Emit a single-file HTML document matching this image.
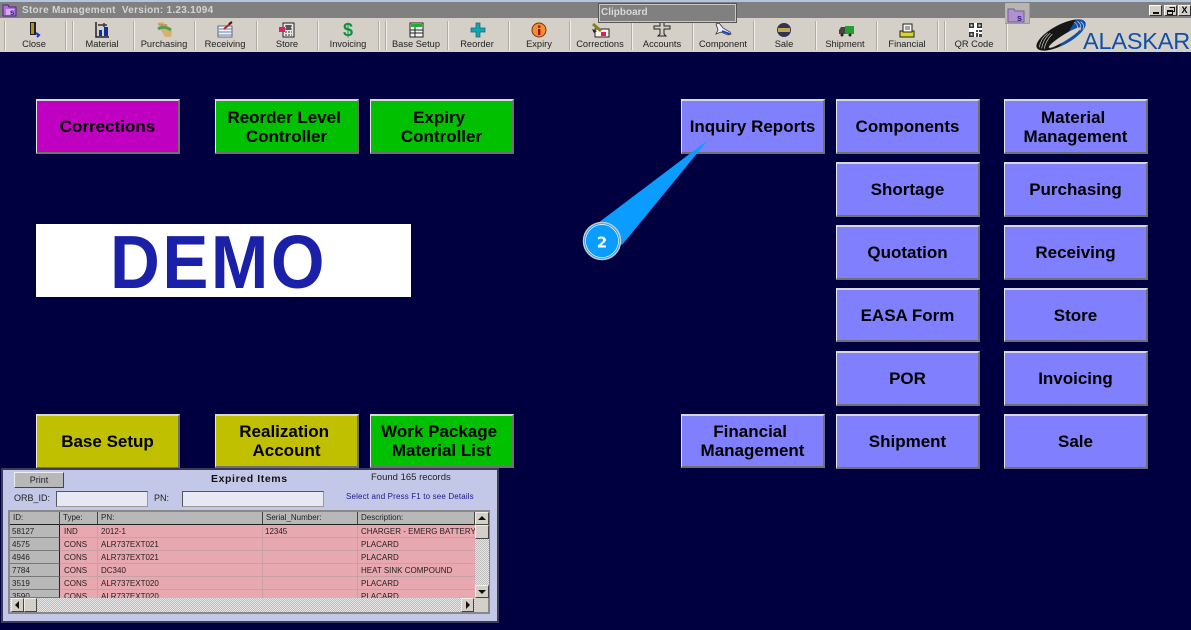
<!DOCTYPE html>
<html><head><meta charset="utf-8"><title>Store Management</title>
<style>
html,body{margin:0;padding:0}
body{width:1191px;height:630px;overflow:hidden;background:#000040;position:relative;font-family:"Liberation Sans",sans-serif}
div,svg,span{position:absolute;box-sizing:border-box}
.tbar{left:0;top:18px;width:1191px;height:34px;background:#d4d0c8}
.sep{top:21px;width:2px;height:29px;border-left:1px solid #aeaba5;border-right:1px solid #f0efec}
.l{top:38px;width:80px;text-align:center;font-size:9.3px;line-height:12px;color:#222;white-space:nowrap}
.b{width:144px;height:55px;border-style:solid;border-width:2px 2px 2px 1px;border-color:#d8d8d8 #707070 #707070 #e8e8e8;display:flex;align-items:center;justify-content:center;text-align:center;font-weight:bold;font-size:17px;line-height:19px;color:#000;white-space:nowrap}
.p{background:#8080ff}.g{background:#00c000}.y{background:#c0c000}.m{background:#c000c0}
.ic{top:21px;width:20px;height:17px}
.cap{font-size:9px;line-height:12px;color:#222;white-space:nowrap}
.inp{height:16px;background:#e8e8f4;border:1px solid;border-color:#555 #999 #999 #555}
.hd{top:512px;height:13px;background:#b8b8b8;border-bottom:1px solid #222;border-right:1px solid #444;font-size:8px;line-height:12px;color:#222;padding-left:3px;white-space:nowrap}
.idc{left:10px;width:50px;height:13px;background:#b8b8b8;border-bottom:1px solid #777;border-right:1px solid #222;font-size:8px;line-height:13px;color:#222;padding-left:2px;overflow:hidden}
.t{font-size:8px;line-height:12px;color:#222;white-space:nowrap}
.sb{background:#d4d0c8;border:1px solid;border-color:#eee #444 #444 #eee}
.chk{background:conic-gradient(#bcbcbc 25%,#e6e6e6 0 50%,#bcbcbc 0 75%,#e6e6e6 0) 0 0/2px 2px}
.w{top:5px;width:13px;height:11px;background:#d4d0c8;border:1px solid;border-color:#fff #333 #333 #fff}
</style></head><body>
<div style="left:0;top:0;width:1191px;height:2px;background:#b4c4dc"></div>
<div style="left:0;top:2px;width:1191px;height:16px;background:#808080"></div>
<svg style="left:2px;top:3px" width="15" height="14" viewBox="0 0 15 14"><path d="M1 2h5l1 2h7v9H1z" fill="#b070d8" stroke="#502080"/><rect x="4" y="6" width="8" height="6" fill="#d8a8f0"/><text x="8" y="12" font-size="8" font-weight="bold" fill="#201080" font-family="Liberation Sans">s</text></svg>
<div style="left:22px;top:5px;font-size:10px;line-height:12px;font-weight:bold;color:#d4d4d4;white-space:nowrap;letter-spacing:.27px">Store Management&nbsp; Version: 1.23.1094</div>

<div class="tbar"></div>
<div class="sep" style="left:4px"></div><div class="sep" style="left:65px"></div><div class="sep" style="left:72px"></div><div class="sep" style="left:133px"></div><div class="sep" style="left:194px"></div><div class="sep" style="left:256px"></div><div class="sep" style="left:317px"></div><div class="sep" style="left:378px"></div><div class="sep" style="left:385px"></div><div class="sep" style="left:447px"></div><div class="sep" style="left:508px"></div><div class="sep" style="left:569px"></div><div class="sep" style="left:631px"></div><div class="sep" style="left:692px"></div><div class="sep" style="left:753px"></div><div class="sep" style="left:815px"></div><div class="sep" style="left:876px"></div><div class="sep" style="left:937px"></div><div class="sep" style="left:944px"></div><div class="sep" style="left:1006px"></div>

<svg class="ic" style="left:24px" viewBox="0 0 20 17"><path d="M6 1h6v13H6z" fill="#222"/><path d="M7 2h3v11H7z" fill="#b09020"/><path d="M12 12l3 2-2 2" fill="none" stroke="#2030c0" stroke-width="2"/></svg>
<svg class="ic" style="left:92px" viewBox="0 0 20 17"><path d="M4 1v15h13" fill="none" stroke="#222" stroke-width="1.500"/><path d="M7 9h3v6H7zM12 6h4v9h-4z" fill="#1030a0"/><path d="M6 4h9M12 2v4" stroke="#333" stroke-width="1.500" fill="none"/></svg>
<svg class="ic" style="left:154px" viewBox="0 0 20 17"><path d="M3 2l6-1 9 9-1 6-6 0z" fill="#d8b070"/><path d="M4 8q6-4 13 1" stroke="#50a050" stroke-width="3" fill="none"/><path d="M5 3q5 2 8 1" stroke="#c09060" stroke-width="2" fill="none"/></svg>
<svg class="ic" style="left:215px" viewBox="0 0 20 17"><rect x="3" y="5" width="14" height="11" fill="#f4f4f4" stroke="#668"/><path d="M3 8h14M3 11h14M3 14h14" stroke="#6080b0"/><path d="M9 8l7-6" stroke="#c02020" stroke-width="2"/><path d="M14 3l3-2" stroke="#222" stroke-width="2"/></svg>
<svg class="ic" style="left:277px" viewBox="0 0 20 17"><rect x="6" y="2" width="11" height="14" fill="#e8e8e8" stroke="#222"/><path d="M8 5h7M8 8h7M8 11h7M8 14h7" stroke="#333" stroke-dasharray="2 1"/><rect x="2" y="6" width="6" height="5" fill="#e02060"/><rect x="9" y="4" width="5" height="5" fill="#555"/></svg>
<svg class="ic" style="left:338px" viewBox="0 0 20 17"><text x="10" y="15" text-anchor="middle" font-size="18" font-weight="bold" fill="#109040" font-family="Liberation Sans">$</text></svg>
<svg class="ic" style="left:407px" viewBox="0 0 20 17"><rect x="3" y="2" width="13" height="14" fill="#f4f4f4" stroke="#222"/><rect x="4" y="3" width="11" height="3" fill="#20b030"/><path d="M3 9h13M3 12h13M8 6v10" stroke="#222"/></svg>
<svg class="ic" style="left:468px" viewBox="0 0 20 17"><path d="M8 2h4v5h5v4h-5v5H8v-5H3V7h5z" fill="#10a8b0" stroke="#206070" stroke-width=".7"/></svg>
<svg class="ic" style="left:529px" viewBox="0 0 20 17"><circle cx="10" cy="9" r="7" fill="#f09030" stroke="#803010"/><rect x="9" y="8" width="2.400" height="6" fill="#a01010"/><rect x="9" y="4.500" width="2.400" height="2.200" fill="#a01010"/></svg>
<svg class="ic" style="left:590px" viewBox="0 0 20 17"><path d="M5 8h14v8H5z" fill="#f4f4f4" stroke="#222"/><path d="M3 3l8 7" stroke="#888020" stroke-width="3"/><path d="M2 8l5 2-3 2z" fill="#222"/><rect x="11" y="11" width="5" height="4" fill="#e02050"/></svg>
<svg class="ic" style="left:652px" viewBox="0 0 20 17"><path d="M8 1h4v4h6v3h-6v5l2 2H6l2-2V8H2V5h6z" fill="#d4d0c8" stroke="#222"/></svg>
<svg class="ic" style="left:713px" viewBox="0 0 20 17"><path d="M3 3l3-1 4 5 7 4 1 2-3 1-7-3-5 2 2-4z" fill="#eef" stroke="#333" stroke-width=".8"/><path d="M9 10l8 3" stroke="#2040d0" stroke-width="2"/></svg>
<svg class="ic" style="left:774px" viewBox="0 0 20 17"><circle cx="10" cy="9" r="7" fill="#333355"/><rect x="4" y="7" width="12" height="4" fill="#c0a850"/></svg>
<svg class="ic" style="left:836px" viewBox="0 0 20 17"><rect x="9" y="5" width="9" height="8" fill="#20a030"/><path d="M3 13V9l2-3h4v7z" fill="#444"/><circle cx="6" cy="14" r="1.500" fill="#222"/><circle cx="14" cy="14" r="1.500" fill="#222"/></svg>
<svg class="ic" style="left:897px" viewBox="0 0 20 17"><rect x="3" y="10" width="14" height="6" fill="#d8d820" stroke="#222"/><rect x="6" y="3" width="9" height="8" fill="#f4f4f4" stroke="#222"/><path d="M8 6h5M8 8h5" stroke="#555"/></svg>
<svg class="ic" style="left:966px" viewBox="0 0 20 17"><rect x="3" y="2" width="13" height="14" fill="#fff"/><path d="M3 2h5v5H3zM11 2h5v5h-5zM3 11h5v5H3z" fill="#333"/><path d="M4.500 3.500h2v2h-2zM12.500 3.500h2v2h-2zM4.500 12.500h2v2h-2z" fill="#ddd"/><path d="M10 9h2v2h-2zM13 9h3v2h-3zM10 12h2v4h-2zM13 13h3v3h-3z" fill="#444"/></svg>

<div class="l" style="left:-6px">Close</div><div class="l" style="left:62px">Material</div><div class="l" style="left:124px">Purchasing</div><div class="l" style="left:185px">Receiving</div><div class="l" style="left:247px">Store</div><div class="l" style="left:308px">Invoicing</div><div class="l" style="left:376px">Base Setup</div><div class="l" style="left:437px">Reorder</div><div class="l" style="left:499px">Expiry</div><div class="l" style="left:560px">Corrections</div><div class="l" style="left:622px">Accounts</div><div class="l" style="left:683px">Component</div><div class="l" style="left:744px">Sale</div><div class="l" style="left:805px">Shipment</div><div class="l" style="left:867px">Financial</div><div class="l" style="left:934px">QR Code</div>

<div style="left:598px;top:3px;width:139px;height:20px;background:#808080;border:1px solid #555;box-shadow:inset 0 0 0 1px #c8c8c8;font-size:10px;line-height:18px;color:#d8d8d8;font-weight:bold;padding-left:2px">Clipboard</div>

<div style="left:1005px;top:3px;width:25px;height:21px;background:#b8b4b0;border-right:1px solid #9a9a9a;border-bottom:1px solid #9a9a9a"></div>
<svg style="left:1007px;top:7px" width="18" height="16" viewBox="0 0 18 16"><path d="M1 2h6l1 2h9v11H1z" fill="#b090d0" stroke="#706090"/><text x="10" y="14" font-size="9" font-weight="bold" fill="#302080" font-family="Liberation Sans">s</text></svg>
<div class="w" style="left:1149px"><svg style="left:3px;top:6px" width="6" height="2"><rect width="6" height="2" fill="#111"/></svg></div>
<div class="w" style="left:1164px"><svg style="left:2px;top:1px" width="8" height="8"><path d="M2.500.5h5v4h-2M.5 3.500h5v4h-5zM.5 4.500h5" fill="none" stroke="#111"/></svg></div>
<div class="w" style="left:1178px;font-size:9px;line-height:9px;text-align:center;font-weight:bold">X</div>

<svg style="left:1034px;top:18px" width="56" height="34" viewBox="102 54 168 102"><defs><clipPath id="bl"><path d="M125 158L270 158 270 62 245 85 165 132z"/></clipPath></defs>
<ellipse cx="183" cy="105" rx="82" ry="30" transform="rotate(-28 183 105)" fill="#161616"/>
<ellipse cx="183" cy="105" rx="82" ry="30" transform="rotate(-28 183 105)" fill="#1050a8" clip-path="url(#bl)"/>
<ellipse cx="194" cy="113" rx="56" ry="9" transform="rotate(-32 194 113)" fill="#d4d0c8"/>
<path d="M118 142q3-25 25-42M125 145q3-25 26-46M133 146q3-22 24-44M222 66q16 8 8 30M232 64q16 10 8 28M242 65q14 10 6 24" stroke="#d4d0c8" stroke-width="2" fill="none"/></svg>
<div style="left:1083px;top:29px;width:108px;height:23px;overflow:hidden;font-size:23.500px;line-height:25px;color:#1050a8;white-space:nowrap;letter-spacing:-.2px">ALASKAR</div>

<div class="b m" style="left:36px;top:99px">Corrections</div>
<div class="b g" style="left:215px;top:99px"><span style="position:static">Reorder Level&nbsp;<br>Controller</span></div>
<div class="b g" style="left:370px;top:99px"><span style="position:static">Expiry&nbsp;<br>Controller</span></div>
<div class="b p" style="left:681px;top:99px">Inquiry Reports</div>
<div class="b p" style="left:836px;top:99px">Components</div>
<div class="b p" style="left:1004px;top:99px"><span style="position:static">Material&nbsp;<br>Management</span></div>
<div class="b p" style="left:836px;top:162px">Shortage</div>
<div class="b p" style="left:1004px;top:162px">Purchasing</div>
<div class="b p" style="left:836px;top:225px">Quotation</div>
<div class="b p" style="left:1004px;top:225px">Receiving</div>
<div class="b p" style="left:836px;top:288px;height:54px">EASA Form</div>
<div class="b p" style="left:1004px;top:288px;height:54px">Store</div>
<div class="b p" style="left:836px;top:351px">POR</div>
<div class="b p" style="left:1004px;top:351px">Invoicing</div>
<div class="b y" style="left:36px;top:414px">Base Setup</div>
<div class="b y" style="left:215px;top:414px;height:54px"><span style="position:static">Realization&nbsp;<br>Account</span></div>
<div class="b g" style="left:370px;top:414px;height:54px"><span style="position:static">Work Package&nbsp;<br>Material List</span></div>
<div class="b p" style="left:681px;top:414px;height:54px"><span style="position:static">Financial&nbsp;<br>Management</span></div>
<div class="b p" style="left:836px;top:414px">Shipment</div>
<div class="b p" style="left:1004px;top:414px">Sale</div>

<div style="left:36px;top:224px;width:375px;height:73px;background:#fff"></div>
<div style="left:110px;top:225px;height:76px;font-size:69px;line-height:76px;font-weight:bold;color:#1a20a8;white-space:nowrap;letter-spacing:2.500px;transform:scaleY(1.09);transform-origin:center">DEMO</div>

<svg style="left:570px;top:130px" width="150" height="140" viewBox="570 130 150 140"><polygon points="708,140 598,223 622,245" fill="#0a9cff"/><circle cx="602" cy="241" r="18.500" fill="#0a9cff" stroke="#c8c8c8" stroke-width="1.500"/><circle cx="602" cy="241" r="16.500" fill="none" stroke="#fff" stroke-width=".7"/><text x="602" y="247.500" text-anchor="middle" font-family="DejaVu Sans" font-weight="bold" font-size="15" fill="#fff">2</text></svg>

<div style="left:1px;top:468px;width:498px;height:155px;background:#c4c8e8;border:2px solid #3c3c58"></div>
<div style="left:14px;top:472px;width:50px;height:16px;background:#b8b8b8;border:1px solid;border-color:#eee #444 #444 #eee;font-size:9px;line-height:14px;text-align:center;color:#222">Print</div>
<div style="left:211px;top:472px;font-size:10.500px;line-height:14px;font-weight:bold;color:#111;white-space:nowrap;letter-spacing:.6px">Expired Items</div>
<div style="left:371px;top:472px;font-size:9.500px;line-height:12px;color:#222;white-space:nowrap">Found 165 records</div>
<div class="cap" style="left:14px;top:492px">ORB_ID:</div>
<div class="inp" style="left:56px;top:491px;width:92px"></div>
<div class="cap" style="left:154px;top:492px">PN:</div>
<div class="inp" style="left:182px;top:491px;width:142px"></div>
<div style="left:346px;top:491px;font-size:8px;line-height:12px;color:#1a1a90;white-space:nowrap;letter-spacing:.15px">Select and Press F1 to see Details</div>

<div style="left:8px;top:510px;width:482px;height:104px;background:#d4d0c8;border:2px solid #888"></div>
<div class="hd" style="left:10px;width:50px">ID:</div><div class="hd" style="left:60px;width:38px">Type:</div><div class="hd" style="left:98px;width:165px">PN:</div><div class="hd" style="left:263px;width:95px">Serial_Number:</div><div class="hd" style="left:358px;width:117px">Description:</div>

<div style="left:60px;top:525px;width:415px;height:73px;background:repeating-linear-gradient(#e8a8b0 0 12px,#c8a0a8 12px 13px)"></div>
<div style="left:97px;top:525px;width:1px;height:73px;background:#c8a0a8"></div>
<div style="left:262px;top:525px;width:1px;height:73px;background:#c8a0a8"></div>
<div style="left:357px;top:525px;width:1px;height:73px;background:#c8a0a8"></div>

<div class="idc" style="top:525px">58127</div><div class="idc" style="top:538px">4575</div><div class="idc" style="top:551px">4946</div><div class="idc" style="top:564px">7784</div><div class="idc" style="top:577px">3519</div><div class="idc" style="top:590px;height:8px">3590</div>

<div class="t" style="left:64px;top:526px">IND</div><div class="t" style="left:101px;top:526px">2012-1</div><div class="t" style="left:265px;top:526px">12345</div><div class="t" style="left:361px;top:526px;width:115px;overflow:hidden">CHARGER - EMERG BATTERY</div>
<div class="t" style="left:64px;top:539px">CONS</div><div class="t" style="left:101px;top:539px">ALR737EXT021</div><div class="t" style="left:361px;top:539px">PLACARD</div>
<div class="t" style="left:64px;top:552px">CONS</div><div class="t" style="left:101px;top:552px">ALR737EXT021</div><div class="t" style="left:361px;top:552px">PLACARD</div>
<div class="t" style="left:64px;top:565px">CONS</div><div class="t" style="left:101px;top:565px">DC340</div><div class="t" style="left:361px;top:565px">HEAT SINK COMPOUND</div>
<div class="t" style="left:64px;top:578px">CONS</div><div class="t" style="left:101px;top:578px">ALR737EXT020</div><div class="t" style="left:361px;top:578px">PLACARD</div>
<div class="t" style="left:64px;top:591px;height:7px;overflow:hidden">CONS</div><div class="t" style="left:101px;top:591px;height:7px;overflow:hidden">ALR737EXT020</div><div class="t" style="left:361px;top:591px;height:7px;overflow:hidden">PLACARD</div>

<div class="chk" style="left:10px;top:598px;width:465px;height:14px"></div>
<div class="sb" style="left:11px;top:598px;width:13px;height:14px"></div>
<svg style="left:14px;top:601px" width="7" height="8"><path d="M5 0v8L1 4z" fill="#111"/></svg>
<div class="sb" style="left:24px;top:598px;width:13px;height:14px"></div>
<div class="sb" style="left:461px;top:598px;width:13px;height:14px"></div>
<svg style="left:465px;top:601px" width="7" height="8"><path d="M1 0v8l4-4z" fill="#111"/></svg>
<div class="chk" style="left:475px;top:512px;width:14px;height:86px"></div>
<div class="sb" style="left:475px;top:512px;width:14px;height:13px"></div>
<svg style="left:478px;top:515px" width="8" height="6"><path d="M0 5h8L4 1z" fill="#111"/></svg>
<div class="sb" style="left:475px;top:525px;width:14px;height:14px"></div>
<div class="sb" style="left:475px;top:585px;width:14px;height:13px"></div>
<svg style="left:478px;top:589px" width="8" height="6"><path d="M0 1h8L4 5z" fill="#111"/></svg>
</body></html>
